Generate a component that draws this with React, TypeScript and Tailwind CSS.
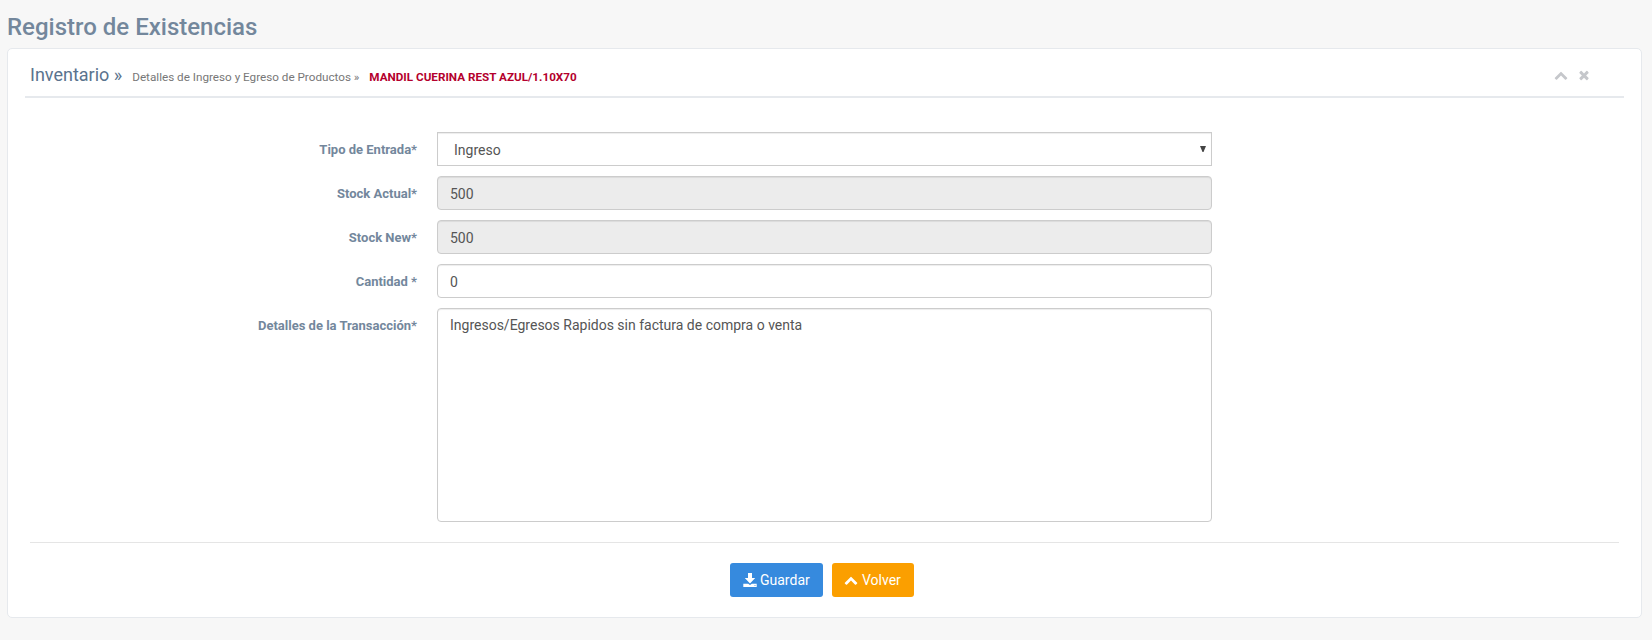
import type { ReactNode } from "react";

const CHEVRON =
  "M1683 1331l-166 165q-19 19-45 19t-45-19l-531-531-531 531q-19 19-45 19t-45-19l-166-165q-19-19-19-45.5t19-45.5l742-741q19-19 45-19t45 19l742 741q19 19 19 45.5t-19 45.5z";
const CLOSE =
  "M1490 1322q0 40-28 68l-136 136q-28 28-68 28t-68-28l-294-294-294 294q-28 28-68 28t-68-28l-136-136q-28-28-28-68t28-68l294-294-294-294q-28-28-28-68t28-68l136-136q28-28 68-28t68 28l294 294 294-294q28-28 68-28t68 28l136 136q28 28 28 68t-28 68l-294 294 294 294q28 28 28 68z";

function Glyph({ d, className }: { d: string; className: string }) {
  return (
    <svg viewBox="0 0 1792 1792" fill="currentColor" className={className} aria-hidden="true">
      <path d={d} />
    </svg>
  );
}

function SaveIcon() {
  return (
    <svg viewBox="0 0 14 14" fill="currentColor" className="h-[14px] w-[14px]" aria-hidden="true">
      <path d="M5 0h4v5h3.2L7 10.4 1.8 5H5z" />
      <path fillRule="evenodd" d="M.3 10.7h4.9L7 12l1.800-1.300h4.900V14H.3zM11.500 12v.8h1V12z" />
    </svg>
  );
}

function Row({ label, children }: { label: string; children: ReactNode }) {
  return (
    <div className="flex">
      <label className="w-[387px] shrink-0 pt-[9px] text-right text-[13px] leading-[18px] font-bold text-[#73879c]">
        {label}
      </label>
      <div className="ml-5 w-[775px]">{children}</div>
    </div>
  );
}

const field =
  "block h-[34px] w-full rounded-[4px] border border-[#ccc] px-3 pt-[2px] text-[14px] leading-5 text-[#555] shadow-[inset_0_1px_1px_rgba(0,0,0,0.075)] outline-none";

export default function App() {
  return (
    <div className="min-h-[640px] bg-[#f7f7f7] pt-[14px] pr-[10px] pl-[7px] font-[Roboto,sans-serif] text-[#73879c]">
      <h3 className="h-[34px] text-[24px] leading-[27px] font-medium">Registro de Existencias</h3>

      <section className="h-[570px] rounded-[5px] border border-[#e6e9ed] bg-white px-[17px]">
        <header className="flex h-[49px] items-start justify-between border-b-2 border-[#e6e9ed] pr-[33px] pl-[5px]">
          <h2 className="flex items-baseline pt-[16px] text-[18px] leading-5 text-[#5a738e]">
            Inventario »
            <small className="ml-[10px] text-[11.7px] text-[#777]">Detalles de Ingreso y Egreso de Productos »</small>
            <small className="ml-[10px] text-[11.7px] font-bold text-[#b4002d]">MANDIL CUERINA REST AZUL/1.10X70</small>
          </h2>
          <div className="flex gap-[9px] pt-[19px] text-[#c5c7cb]">
            <Glyph d={CHEVRON} className="h-[14px] w-[14px]" />
            <Glyph d={CLOSE} className="h-[14px] w-[14px]" />
          </div>
        </header>

        <form className="px-[5px] pt-[34px]" onSubmit={(e) => e.preventDefault()}>
          <div className="flex flex-col gap-[10px]">
            <Row label="Tipo de Entrada*">
              <div className="flex h-[34px] items-center justify-between border border-[#ccc] pr-[5px] pl-4 text-[14px] leading-5 text-[#555] shadow-[inset_0_1px_1px_rgba(0,0,0,0.075)]">
                <span className="pt-[2px]">Ingreso</span>
                <svg viewBox="0 0 6 6" className="h-[6px] w-[6px]" fill="#444" aria-hidden="true">
                  <path d="M0 0h6L3.5 6h-1z" />
                </svg>
              </div>
            </Row>
            <Row label="Stock Actual*">
              <input className={`${field} bg-[#ececec]`} readOnly value="500" />
            </Row>
            <Row label="Stock New*">
              <input className={`${field} bg-[#ececec]`} readOnly value="500" />
            </Row>
            <Row label="Cantidad *">
              <input className={`${field} bg-white`} defaultValue="0" />
            </Row>
            <Row label="Detalles de la Transacción*">
              <textarea
                className="block h-[214px] w-full resize-none rounded-[4px] border border-[#ccc] bg-white px-3 py-1.5 text-[14px] leading-5 text-[#555] shadow-[inset_0_1px_1px_rgba(0,0,0,0.075)] outline-none"
                defaultValue="Ingresos/Egresos Rapidos sin factura de compra o venta"
              />
            </Row>
          </div>

          <div className="mt-5 flex gap-[9px] border-t border-[#e5e5e5] pt-5 pl-[700px]">
            <button className="flex h-[34px] w-[93px] items-center gap-[3px] rounded-[3px] bg-[#368ade] pl-[13px] text-[14px] text-white">
              <SaveIcon />
              Guardar
            </button>
            <button className="flex h-[34px] w-[82px] items-center gap-1 rounded-[3px] bg-[#fb9f00] pl-[12px] text-[14px] text-white">
              <Glyph d={CHEVRON} className="h-[14px] w-[14px]" />
              Volver
            </button>
          </div>
        </form>
      </section>
    </div>
  );
}
